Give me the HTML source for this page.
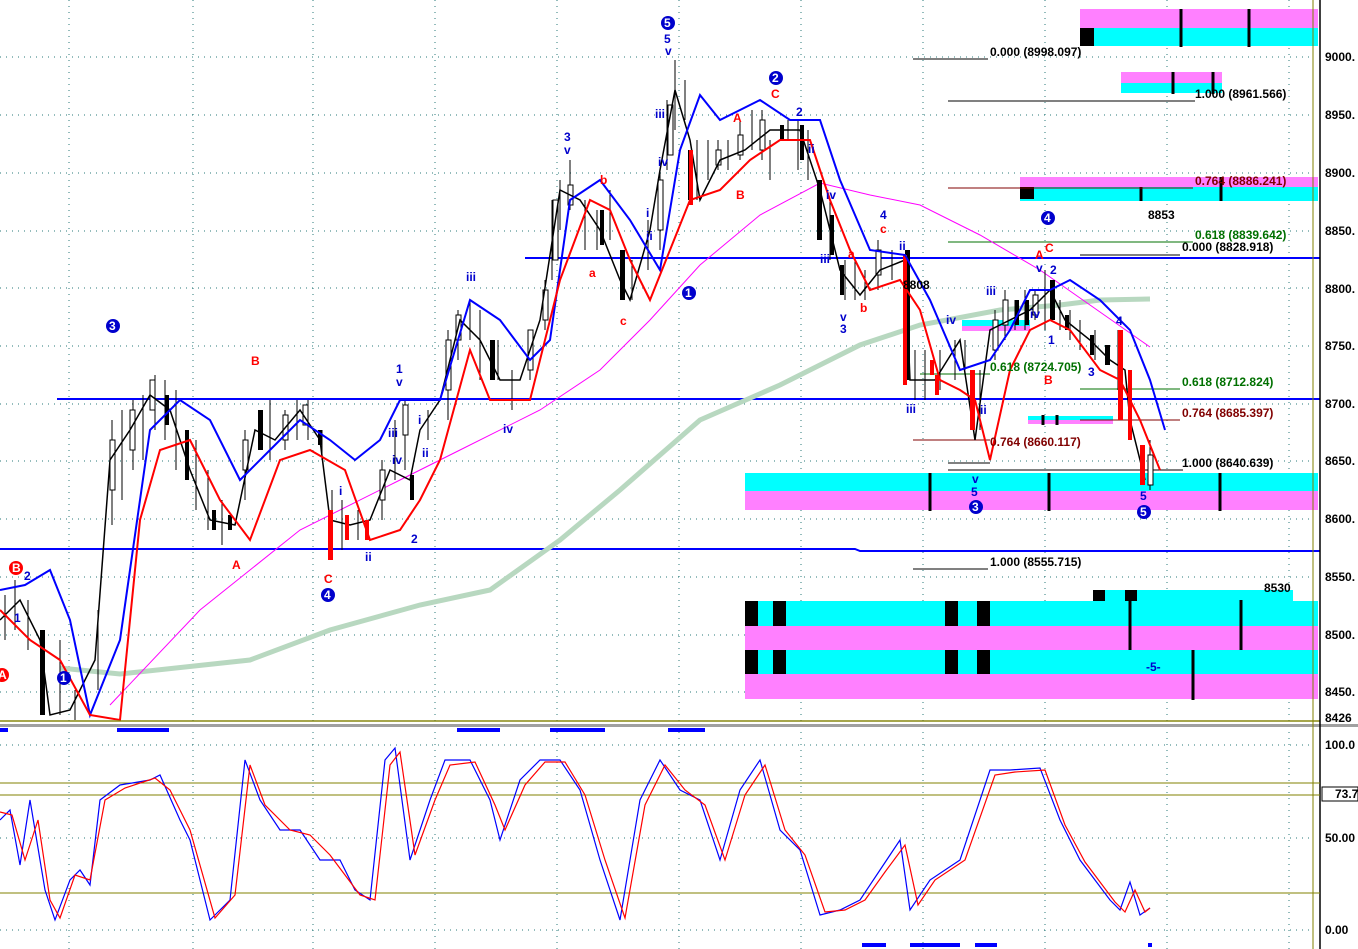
<!DOCTYPE html>
<html><head><meta charset="utf-8"><style>
html,body{margin:0;padding:0;background:#fff;width:1358px;height:949px;overflow:hidden}
svg{display:block}
text{font-family:"Liberation Sans",sans-serif;font-size:12px;font-weight:bold}
</style></head><body>
<svg width="1358" height="949" viewBox="0 0 1358 949" xmlns="http://www.w3.org/2000/svg">
<rect width="1358" height="949" fill="#fff"/>
<g stroke="#2a7a7a" stroke-dasharray="1,5" stroke-width="1">
<line x1="0" y1="57" x2="1313" y2="57"/><line x1="0" y1="115" x2="1313" y2="115"/>
<line x1="0" y1="173" x2="1313" y2="173"/><line x1="0" y1="231" x2="1313" y2="231"/>
<line x1="0" y1="288" x2="1313" y2="288"/><line x1="0" y1="346" x2="1313" y2="346"/>
<line x1="0" y1="404" x2="1313" y2="404"/><line x1="0" y1="461" x2="1313" y2="461"/>
<line x1="0" y1="519" x2="1313" y2="519"/><line x1="0" y1="577" x2="1313" y2="577"/>
<line x1="0" y1="635" x2="1313" y2="635"/><line x1="0" y1="692" x2="1313" y2="692"/>
<line x1="0" y1="745" x2="1313" y2="745"/><line x1="0" y1="838" x2="1313" y2="838"/><line x1="0" y1="930" x2="1313" y2="930"/>
<line x1="69" y1="0" x2="69" y2="949"/><line x1="193" y1="0" x2="193" y2="949"/><line x1="313" y1="0" x2="313" y2="949"/>
<line x1="435" y1="0" x2="435" y2="949"/><line x1="557" y1="0" x2="557" y2="949"/><line x1="679" y1="0" x2="679" y2="949"/>
<line x1="801" y1="0" x2="801" y2="949"/><line x1="923" y1="0" x2="923" y2="949"/><line x1="1045" y1="0" x2="1045" y2="949"/>
<line x1="1167" y1="0" x2="1167" y2="949"/><line x1="1289" y1="0" x2="1289" y2="949"/>
</g>
<g>
<rect x="1080" y="9" width="238" height="19" fill="#ff80ff"/><rect x="1080" y="28" width="238" height="18" fill="#00ffff"/>
<rect x="1080" y="28" width="14" height="18" fill="#000"/>
<rect x="1121" y="72" width="101" height="11" fill="#ff80ff"/><rect x="1121" y="83" width="101" height="10" fill="#00ffff"/>
<rect x="1020" y="177" width="298" height="10" fill="#ff80ff"/><rect x="1020" y="187" width="298" height="14" fill="#00ffff"/>
<rect x="1020" y="187" width="14" height="12" fill="#000"/>
<rect x="962" y="320" width="68" height="6" fill="#00ffff"/><rect x="962" y="326" width="68" height="5" fill="#ff80ff"/>
<rect x="1028" y="416" width="85" height="4" fill="#00ffff"/><rect x="1028" y="420" width="85" height="4" fill="#ff80ff"/>
<rect x="745" y="473" width="573" height="18" fill="#00ffff"/><rect x="745" y="491" width="573" height="19" fill="#ff80ff"/>
<rect x="1093" y="590" width="200" height="11" fill="#00ffff"/>
<rect x="745" y="601" width="573" height="25" fill="#00ffff"/><rect x="745" y="626" width="573" height="24" fill="#ff80ff"/>
<rect x="745" y="650" width="573" height="24" fill="#00ffff"/><rect x="745" y="674" width="573" height="25" fill="#ff80ff"/>
<g fill="#000">
<rect x="745" y="601" width="13" height="25"/><rect x="773" y="601" width="13" height="25"/><rect x="945" y="601" width="13" height="25"/><rect x="977" y="601" width="13" height="25"/>
<rect x="745" y="650" width="13" height="24"/><rect x="773" y="650" width="13" height="24"/><rect x="945" y="650" width="13" height="24"/><rect x="977" y="650" width="13" height="24"/>
<rect x="1093" y="590" width="12" height="11"/><rect x="1125" y="590" width="12" height="11"/>
</g>
<g stroke="#000" stroke-width="3">
<line x1="1181" y1="9" x2="1181" y2="47"/><line x1="1249" y1="9" x2="1249" y2="47"/>
<line x1="1173" y1="72" x2="1173" y2="94"/><line x1="1213" y1="72" x2="1213" y2="94"/>
<line x1="1221" y1="177" x2="1221" y2="201"/><line x1="1141" y1="187" x2="1141" y2="201"/>
<line x1="930" y1="473" x2="930" y2="511"/><line x1="1049" y1="473" x2="1049" y2="511"/><line x1="1220" y1="473" x2="1220" y2="511"/>
<line x1="1130" y1="600" x2="1130" y2="650"/><line x1="1241" y1="600" x2="1241" y2="650"/><line x1="1193" y1="650" x2="1193" y2="700"/>
<line x1="1043" y1="415" x2="1043" y2="425"/><line x1="1057" y1="415" x2="1057" y2="425"/>
</g>
</g>
<g stroke="#0000ff" stroke-width="2">
<line x1="525" y1="258" x2="1320" y2="258"/><line x1="57" y1="399" x2="1320" y2="399"/>
<path d="M0 549 L855 549 L860 551 L1320 551" fill="none"/>
</g>
<g stroke="#000" stroke-width="1">
<line x1="913" y1="59" x2="988" y2="59"/><line x1="948" y1="101" x2="1195" y2="101"/>
<line x1="1080" y1="255" x2="1180" y2="255"/><line x1="948" y1="470" x2="1183" y2="470"/>
<line x1="913" y1="569" x2="988" y2="569"/><line x1="948" y1="463" x2="990" y2="463"/>
</g>
<line x1="948" y1="188" x2="1193" y2="188" stroke="#800000"/>
<line x1="948" y1="242" x2="1193" y2="242" stroke="#007000"/>
<line x1="1080" y1="389" x2="1180" y2="389" stroke="#007000"/>
<line x1="1080" y1="420" x2="1180" y2="420" stroke="#800000"/>
<line x1="913" y1="440" x2="990" y2="440" stroke="#800000"/>
<line x1="920" y1="374" x2="990" y2="374" stroke="#007000"/>
<polyline fill="none" stroke="#b8d8c0" stroke-width="5" points="60,668 120,674 250,660 330,630 420,605 490,590 560,540 620,490 700,420 780,385 860,345 920,325 1000,310 1060,305 1100,300 1150,299"/>
<polyline fill="none" stroke="#ff00ff" stroke-width="1" points="110,705 200,610 300,530 400,480 460,450 540,410 600,370 650,320 700,265 760,215 820,183 870,195 920,205 980,235 1040,270 1090,305 1150,347"/>
<!-- candles -->
<g stroke="#000" stroke-width="1" fill="#fff">
<path d="M5 595V640M15 580V630M28 600V650M60 640V715M75 690V720M98 610V690M112 420V525M122 410V500M133 400V470M143 395V460M155 375V430M165 380V440M176 390V470M196 440V510M208 470V530M222 500V545M245 430V500M270 400V460M285 410V450M297 400V440M308 400V440M322 430V460M332 490V560M342 500V550M358 510V540M382 460V520M395 420V480M405 400V470M428 410V440M448 330V420M458 310V360M470 300V340M480 310V380M498 340V380M512 370V410M530 330V380M545 280V330M552 200V280M560 180V230M570 160V210M585 200V250M597 210V250M610 190V240M632 260V300M648 220V270M660 170V250M667 100V170M675 60V130M685 80V120M697 140V200M708 140V180M718 140V170M728 140V170M740 120V160M752 110V150M762 110V160M770 140V180M788 120V140M798 120V170M808 130V180M830 200V260M845 260V300M855 260V300M865 270V300M878 240V290M892 250V280M915 350V400M925 350V400M940 350V390M955 340V380M965 340V370M980 370V430M995 310V360M1005 290V340M1015 300V330M1025 290V330M1035 290V320M1045 270V330M1060 300V330M1070 310V340M1080 320V350M1095 330V360M1118 330V390M1150 440V490"/>
</g>
<g fill="#fff" stroke="#000">
<rect x="110" y="440" width="5" height="50"/><rect x="130" y="410" width="5" height="40"/><rect x="150" y="380" width="5" height="30"/>
<rect x="243" y="440" width="5" height="30"/><rect x="283" y="415" width="5" height="25"/><rect x="303" y="405" width="5" height="20"/>
<rect x="380" y="470" width="5" height="30"/><rect x="403" y="405" width="5" height="30"/><rect x="446" y="340" width="5" height="50"/>
<rect x="456" y="315" width="5" height="25"/><rect x="528" y="330" width="5" height="40"/><rect x="543" y="290" width="5" height="30"/>
<rect x="553" y="200" width="5" height="60"/><rect x="568" y="185" width="5" height="20"/><rect x="658" y="180" width="5" height="50"/>
<rect x="668" y="105" width="5" height="50"/><rect x="716" y="150" width="5" height="15"/><rect x="738" y="135" width="5" height="20"/>
<rect x="760" y="120" width="5" height="30"/><rect x="876" y="250" width="5" height="25"/><rect x="993" y="320" width="5" height="30"/>
<rect x="1003" y="300" width="5" height="25"/><rect x="1033" y="295" width="5" height="20"/><rect x="1148" y="455" width="5" height="30"/>
</g>
<polyline fill="none" stroke="#000" stroke-width="1.5" points="0,620 20,600 40,640 50,715 70,710 95,660 110,460 130,430 150,395 170,410 190,470 210,520 235,525 255,430 275,440 300,410 320,440 330,520 350,525 370,520 390,470 410,480 420,430 440,400 460,320 480,340 500,380 520,380 540,320 560,190 580,200 600,230 620,280 630,300 650,230 660,170 675,90 690,140 700,200 720,160 745,150 770,130 800,130 820,190 840,270 860,295 880,270 905,260 910,380 935,380 960,340 975,440 990,330 1030,310 1050,290 1065,320 1090,340 1110,360 1125,370 1130,420 1145,480"/>
<g fill="#000">
<rect x="40" y="630" width="5" height="85"/><rect x="258" y="410" width="5" height="40"/><rect x="620" y="250" width="5" height="50"/>
<rect x="817" y="180" width="5" height="60"/><rect x="905" y="250" width="5" height="130"/><rect x="1050" y="280" width="5" height="40"/>
<rect x="1105" y="345" width="5" height="20"/><rect x="185" y="430" width="4" height="50"/><rect x="490" y="340" width="5" height="40"/>
<rect x="165" y="395" width="4" height="30"/><rect x="212" y="510" width="4" height="20"/><rect x="228" y="515" width="4" height="15"/>
<rect x="318" y="430" width="4" height="15"/><rect x="410" y="475" width="4" height="25"/><rect x="600" y="210" width="4" height="35"/>
<rect x="688" y="150" width="4" height="50"/><rect x="780" y="125" width="4" height="15"/><rect x="800" y="125" width="4" height="35"/>
<rect x="830" y="215" width="4" height="40"/><rect x="840" y="265" width="4" height="30"/><rect x="1015" y="300" width="4" height="25"/>
<rect x="1025" y="300" width="4" height="25"/><rect x="1065" y="315" width="4" height="15"/><rect x="1090" y="335" width="4" height="20"/>
</g>
<g fill="#ff0000">
<rect x="328" y="510" width="5" height="50"/><rect x="345" y="515" width="4" height="25"/><rect x="365" y="520" width="4" height="20"/>
<rect x="689" y="150" width="4" height="55"/><rect x="903" y="255" width="4" height="130"/><rect x="930" y="360" width="4" height="15"/>
<rect x="970" y="370" width="5" height="60"/><rect x="1118" y="330" width="5" height="90"/><rect x="1128" y="370" width="4" height="70"/>
<rect x="1140" y="445" width="5" height="40"/><rect x="935" y="375" width="4" height="20"/>
</g>
<polyline fill="none" stroke="#0000ff" stroke-width="2" points="0,590 25,585 50,570 70,620 90,715 120,640 150,430 180,400 210,420 240,480 270,450 300,420 330,440 355,460 380,440 400,400 440,400 470,300 500,320 530,360 550,340 570,200 600,180 630,220 660,270 680,150 700,95 720,120 760,100 790,120 820,120 840,180 870,250 905,255 930,300 960,370 990,360 1010,330 1030,290 1050,290 1070,280 1100,300 1130,330 1150,380 1165,430"/>
<polyline fill="none" stroke="#ff0000" stroke-width="2" points="0,610 30,640 60,660 90,715 120,720 140,520 160,450 190,440 220,500 250,540 280,460 310,450 345,470 370,540 400,530 420,500 440,460 470,350 490,400 530,400 560,280 590,200 610,210 630,260 650,300 670,250 690,200 720,190 750,160 780,140 810,140 830,200 850,250 870,290 900,280 920,310 940,380 960,390 975,400 990,460 1010,370 1030,330 1050,320 1070,330 1100,370 1120,380 1140,420 1160,470"/>
<rect x="0" y="720" width="1320" height="2" fill="#808000" opacity=".7"/>
<rect x="0" y="724" width="1358" height="3" fill="#a0a0a0"/>
<line x1="1313" y1="0" x2="1313" y2="949" stroke="#808000"/>
<line x1="1320" y1="0" x2="1320" y2="949" stroke="#000" stroke-width="1.5"/>
<g>
<text x="1325" y="61">9000.</text><text x="1325" y="119">8950.</text><text x="1325" y="177">8900.</text>
<text x="1325" y="235">8850.</text><text x="1325" y="293">8800.</text><text x="1325" y="350">8750.</text>
<text x="1325" y="408">8700.</text><text x="1325" y="465">8650.</text><text x="1325" y="523">8600.</text>
<text x="1325" y="581">8550.</text><text x="1325" y="639">8500.</text><text x="1325" y="696">8450.</text>
<text x="1325" y="722" font-size="11">8426</text>
<text x="1325" y="749">100.0</text><text x="1325" y="842">50.00</text><text x="1325" y="934">0.00</text>
<rect x="1322" y="787" width="36" height="14" fill="#fff" stroke="#000"/><text x="1335" y="798">73.7</text>
</g>
<g fill="#000">
<text x="990" y="56">0.000 (8998.097)</text><text x="1195" y="98">1.000 (8961.566)</text>
<text x="1182" y="251">0.000 (8828.918)</text><text x="1182" y="467">1.000 (8640.639)</text>
<text x="990" y="566">1.000 (8555.715)</text><text x="1148" y="219">8853</text><text x="1264" y="592">8530</text>
<text x="903" y="289">8808</text>
</g>
<g fill="#007000"><text x="1195" y="239">0.618 (8839.642)</text><text x="1182" y="386">0.618 (8712.824)</text><text x="990" y="371">0.618 (8724.705)</text></g>
<g fill="#800000"><text x="1195" y="185">0.764 (8886.241)</text><text x="1182" y="417">0.764 (8685.397)</text><text x="990" y="446">0.764 (8660.117)</text></g>
<g fill="#0000cc">
<circle cx="668" cy="23" r="7" fill="#0000cc"/><text x="664" y="27" fill="#fff">5</text>
<circle cx="776" cy="78" r="7"/><text x="772" y="82" fill="#fff">2</text>
<circle cx="113" cy="326" r="7"/><text x="109" y="330" fill="#fff">3</text>
<circle cx="689" cy="293" r="7"/><text x="685" y="297" fill="#fff">1</text>
<circle cx="328" cy="595" r="7"/><text x="324" y="599" fill="#fff">4</text>
<circle cx="1048" cy="218" r="7"/><text x="1044" y="222" fill="#fff">4</text>
<circle cx="976" cy="507" r="7"/><text x="972" y="511" fill="#fff">3</text>
<circle cx="1144" cy="512" r="7"/><text x="1140" y="516" fill="#fff">5</text>
<circle cx="64" cy="678" r="7"/><text x="60" y="682" fill="#fff">1</text>
<text x="664" y="43">5</text><text x="665" y="55">v</text><text x="564" y="141">3</text><text x="564" y="154">v</text>
<text x="655" y="118">iii</text><text x="658" y="166">iv</text><text x="646" y="217">i</text><text x="646" y="240">ii</text>
<text x="466" y="281">iii</text><text x="503" y="433">iv</text><text x="396" y="373">1</text><text x="396" y="386">v</text>
<text x="388" y="437">iii</text><text x="392" y="464">iv</text><text x="418" y="424">i</text><text x="422" y="457">ii</text>
<text x="411" y="543">2</text><text x="365" y="561">ii</text><text x="339" y="495">i</text>
<text x="796" y="116">2</text><text x="808" y="153">ii</text><text x="826" y="199">iv</text><text x="820" y="263">iii</text>
<text x="840" y="321">v</text><text x="840" y="333">3</text><text x="880" y="219">4</text><text x="899" y="250">ii</text>
<text x="906" y="413">iii</text><text x="946" y="324">iv</text><text x="986" y="295">iii</text><text x="980" y="414">ii</text>
<text x="972" y="483">v</text><text x="971" y="496">5</text><text x="1036" y="272">v</text><text x="1050" y="274">2</text>
<text x="1030" y="318">iv</text><text x="1048" y="344">1</text><text x="1088" y="376">3</text><text x="1116" y="325">4</text>
<text x="1140" y="500">5</text><text x="1146" y="671">-5-</text><text x="24" y="580">2</text><text x="14" y="622">1</text>
</g>
<g fill="#ff0000">
<text x="771" y="98">C</text><text x="733" y="122">A</text><text x="736" y="199">B</text><text x="600" y="184">b</text>
<text x="589" y="277">a</text><text x="620" y="325">c</text><text x="880" y="233">c</text><text x="848" y="258">a</text>
<text x="860" y="312">b</text><text x="1035" y="259">A</text><text x="1045" y="252">C</text><text x="1044" y="384">B</text>
<text x="251" y="365">B</text><text x="232" y="569">A</text><text x="324" y="583">C</text>
<circle cx="16" cy="568" r="7"/><text x="12" y="572" fill="#fff">B</text>
<circle cx="2" cy="675" r="7"/><text x="-2" y="679" fill="#fff">A</text>
</g>
<g stroke="#808000" stroke-width="1"><line x1="0" y1="783" x2="1320" y2="783"/><line x1="0" y1="795" x2="1320" y2="795"/><line x1="0" y1="893" x2="1320" y2="893"/></g>
<polyline fill="none" stroke="#0000ff" stroke-width="1.2" points="0,820 10,810 20,865 30,800 45,890 55,920 70,880 80,870 90,885 100,800 120,785 150,780 160,775 180,820 190,840 210,920 230,900 245,760 260,800 280,830 300,830 320,860 340,860 355,890 370,900 385,760 395,748 410,860 430,800 445,760 470,760 490,800 500,840 520,780 540,760 560,760 580,790 600,860 620,920 640,800 660,760 680,790 700,800 720,860 740,790 760,760 780,830 800,850 820,915 840,910 860,900 880,870 900,840 910,910 930,880 960,860 990,770 1010,770 1040,768 1060,820 1080,860 1110,900 1120,910 1130,882 1140,915 1150,908"/>
<polyline fill="none" stroke="#ff0000" stroke-width="1.2" points="0,812 12,815 25,860 38,820 50,900 60,918 75,875 90,880 105,800 125,788 155,778 170,790 190,830 215,918 235,895 250,765 265,805 290,830 310,835 330,855 360,895 375,900 390,765 400,752 415,855 435,800 450,765 475,762 495,805 505,830 525,785 545,762 565,762 585,795 605,860 625,918 645,805 665,765 685,790 705,805 725,860 745,795 765,765 785,830 805,855 825,912 845,910 865,900 885,872 905,845 918,905 935,880 965,860 995,775 1015,772 1045,770 1065,825 1085,862 1115,902 1125,912 1135,890 1145,912 1150,908"/>
<g fill="#0000ff">
<rect x="0" y="728" width="8" height="4"/><rect x="117" y="728" width="52" height="4"/><rect x="457" y="728" width="43" height="4"/>
<rect x="550" y="728" width="55" height="4"/><rect x="668" y="728" width="37" height="4"/>
<rect x="862" y="943" width="24" height="4"/><rect x="910" y="943" width="50" height="4"/><rect x="975" y="943" width="22" height="4"/><rect x="1148" y="943" width="4" height="4"/>
</g>
</svg>
</body></html>
